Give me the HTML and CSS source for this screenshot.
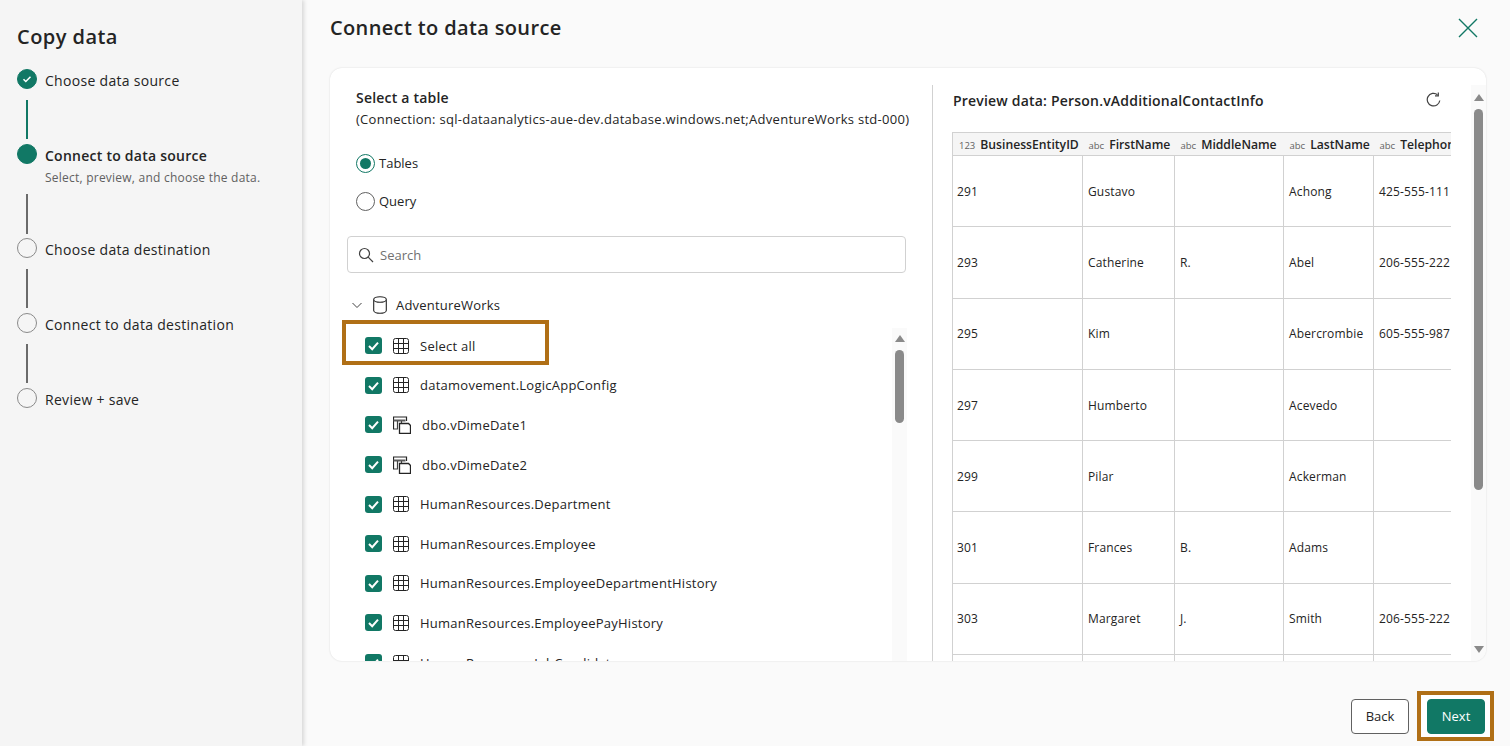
FILE: index.html
```html
<!DOCTYPE html>
<html lang="en">
<head>
  <meta charset="UTF-8">
  <title>Copy data</title>
  <link rel="stylesheet" href="styles.css">
</head>
<body>
  <!-- shared icons -->
  <svg class="defs" width="0" height="0">
    <symbol id="i-check" viewBox="0 0 17 17">
      <path d="M4 9l3.200 3.200L13 5.600" fill="none" stroke="#fff" stroke-width="2"/>
    </symbol>
    <symbol id="i-table" viewBox="0 0 16 16">
      <rect x="0.500" y="0.500" width="15" height="15" rx="2" fill="none" stroke="#242424"/>
      <path d="M5.500 1v14M10.500 1v14M1 5.500h14M1 10.500h14" stroke="#242424" fill="none"/>
    </symbol>
    <symbol id="i-view" viewBox="0 0 18 18">
      <path d="M.5 13.500V1h13v4" fill="none" stroke="#242424" stroke-width="1.200"/>
      <path d="M.5 4.500h12" fill="none" stroke="#5a5a5a" stroke-width="2"/>
      <path d="M4.500 5v8H1M8.500 5v2" fill="none" stroke="#424242" stroke-width="1.200"/>
      <path d="M6.500 7.500h9l2 2v8h-11z" fill="#fff" stroke="#242424" stroke-width="1.300"/>
    </symbol>
  </svg>

  <!-- === LEFT STEPS === -->
  <aside class="sidebar">
    <h1>Copy data</h1>
    <div class="step">
      <div class="marker">
        <span class="dot dot-done"><svg width="10" height="10" viewBox="0 0 10 10"><path d="M1.500 5.200l2.300 2.300L8.500 2.700" fill="none" stroke="#fff" stroke-width="1.500"/></svg></span>
        <span class="line line-done"></span>
      </div>
      <div class="step-text">Choose data source</div>
    </div>
    <div class="step step-current">
      <div class="marker">
        <span class="dot dot-done"></span>
        <span class="line line-long"></span>
      </div>
      <div class="step-text">
        <strong>Connect to data source</strong>
        <small>Select, preview, and choose the data.</small>
      </div>
    </div>
    <div class="step">
      <div class="marker"><span class="dot"></span><span class="line"></span></div>
      <div class="step-text">Choose data destination</div>
    </div>
    <div class="step">
      <div class="marker"><span class="dot"></span><span class="line"></span></div>
      <div class="step-text">Connect to data destination</div>
    </div>
    <div class="step">
      <div class="marker"><span class="dot"></span></div>
      <div class="step-text">Review + save</div>
    </div>
  </aside>

  <!-- === MAIN PANEL === -->
  <main class="main">
    <header class="main-head">
      <h2>Connect to data source</h2>
      <svg class="close" width="20" height="20" viewBox="0 0 20 20"><path d="M1 1l18 18M19 1L1 19" stroke="#117865" stroke-width="1.400" fill="none"/></svg>
    </header>

    <section class="card">
      <!-- table picker -->
      <div class="picker">
        <div class="picker-head">
          <div class="picker-title">Select a table</div>
          <div class="picker-conn">(Connection: sql-dataanalytics-aue-dev.database.windows.net;AdventureWorks std-000)</div>
        </div>
        <label class="radio-row"><span class="radio radio-on"></span>Tables</label>
        <label class="radio-row"><span class="radio"></span>Query</label>
        <div class="search">
          <svg width="16" height="16" viewBox="0 0 16 16"><circle cx="6.500" cy="6.500" r="5" fill="none" stroke="#424242" stroke-width="1.200"/><path d="M10.200 10.200L15 15" stroke="#424242" stroke-width="1.200"/></svg>
          <span>Search</span>
        </div>
        <div class="tree-root">
          <svg width="12" height="12" viewBox="0 0 12 12"><path d="M1.500 4l4.500 4.500L10.500 4" fill="none" stroke="#424242"/></svg>
          <svg class="db" width="14" height="18" viewBox="0 0 14 18"><path d="M.7 3.500v11c0 1.500 2.800 2.800 6.300 2.800s6.300-1.300 6.300-2.800v-11M.7 3.500C.7 2 3.500.7 7 .7s6.300 1.300 6.300 2.800S10.500 6.300 7 6.300.7 5 .7 3.500z" fill="none" stroke="#242424" stroke-width="1.100"/></svg>
          <span>AdventureWorks</span>
        </div>
        <div class="list-wrap">
          <div class="list">
            <div class="row"><span class="check"><svg width="17" height="17"><use href="#i-check"/></svg></span><svg class="ico" width="16" height="16"><use href="#i-table"/></svg><span class="row-name">Select all</span></div>
            <div class="row"><span class="check"><svg width="17" height="17"><use href="#i-check"/></svg></span><svg class="ico" width="16" height="16"><use href="#i-table"/></svg><span class="row-name">datamovement.LogicAppConfig</span></div>
            <div class="row"><span class="check"><svg width="17" height="17"><use href="#i-check"/></svg></span><svg class="ico" width="18" height="18"><use href="#i-view"/></svg><span class="row-name">dbo.vDimeDate1</span></div>
            <div class="row"><span class="check"><svg width="17" height="17"><use href="#i-check"/></svg></span><svg class="ico" width="18" height="18"><use href="#i-view"/></svg><span class="row-name">dbo.vDimeDate2</span></div>
            <div class="row"><span class="check"><svg width="17" height="17"><use href="#i-check"/></svg></span><svg class="ico" width="16" height="16"><use href="#i-table"/></svg><span class="row-name">HumanResources.Department</span></div>
            <div class="row"><span class="check"><svg width="17" height="17"><use href="#i-check"/></svg></span><svg class="ico" width="16" height="16"><use href="#i-table"/></svg><span class="row-name">HumanResources.Employee</span></div>
            <div class="row"><span class="check"><svg width="17" height="17"><use href="#i-check"/></svg></span><svg class="ico" width="16" height="16"><use href="#i-table"/></svg><span class="row-name">HumanResources.EmployeeDepartmentHistory</span></div>
            <div class="row"><span class="check"><svg width="17" height="17"><use href="#i-check"/></svg></span><svg class="ico" width="16" height="16"><use href="#i-table"/></svg><span class="row-name">HumanResources.EmployeePayHistory</span></div>
            <div class="row"><span class="check"><svg width="17" height="17"><use href="#i-check"/></svg></span><svg class="ico" width="16" height="16"><use href="#i-table"/></svg><span class="row-name">HumanResources.JobCandidate</span></div>
          </div>
          <div class="scroll scroll-list">
            <span class="arrow-up"></span>
            <span class="thumb"></span>
          </div>
          <div class="callout"></div>
        </div>
      </div>

      <!-- preview -->
      <div class="preview">
        <div class="preview-body">
          <div class="preview-head">
            <span>Preview data: Person.vAdditionalContactInfo</span>
            <svg width="16" height="16" viewBox="0 0 16 16"><path d="M13.800 8.500A6.300 6.300 0 1 1 11.500 2.700" fill="none" stroke="#424242" stroke-width="1.200"/><path d="M12.300.5v3.300H9" fill="none" stroke="#424242" stroke-width="1.200"/></svg>
          </div>
          <div class="table-clip">
            <table class="grid">
              <colgroup><col class="c1"><col class="c2"><col class="c3"><col class="c4"><col class="c5"></colgroup>
              <thead>
                <tr>
                  <th><i>123</i>BusinessEntityID</th>
                  <th><i>abc</i>FirstName</th>
                  <th><i>abc</i>MiddleName</th>
                  <th><i>abc</i>LastName</th>
                  <th><i>abc</i>Telephone</th>
                </tr>
              </thead>
              <tbody>
                <tr><td>291</td><td>Gustavo</td><td></td><td>Achong</td><td>425-555-111</td></tr>
                <tr><td>293</td><td>Catherine</td><td>R.</td><td>Abel</td><td>206-555-222</td></tr>
                <tr><td>295</td><td>Kim</td><td></td><td>Abercrombie</td><td>605-555-987</td></tr>
                <tr><td>297</td><td>Humberto</td><td></td><td>Acevedo</td><td></td></tr>
                <tr><td>299</td><td>Pilar</td><td></td><td>Ackerman</td><td></td></tr>
                <tr><td>301</td><td>Frances</td><td>B.</td><td>Adams</td><td></td></tr>
                <tr><td>303</td><td>Margaret</td><td>J.</td><td>Smith</td><td>206-555-222</td></tr>
                <tr><td></td><td></td><td></td><td></td><td></td></tr>
              </tbody>
            </table>
          </div>
        </div>
        <div class="scroll scroll-preview">
          <span class="arrow-up"></span>
          <span class="thumb"></span>
          <span class="arrow-down"></span>
        </div>
      </div>
    </section>

    <footer class="actions">
      <button class="btn">Back</button>
      <div class="next-box"><button class="btn btn-primary">Next</button></div>
    </footer>
  </main>
</body>
</html>
```

FILE: styles.css
```css
:root {
  --green: #117865;
  --text: #242424;
  --line: #d1d1d1;
  --callout: #b06f16;
  --bar: #8a8a8a;
}

* {
  box-sizing: border-box;
}

body {
  margin: 0;
  height: 746px;
  display: flex;
  overflow: hidden;
  background: #fafafa;
  color: var(--text);
  font-family: "Open Sans", "Liberation Sans", sans-serif;
  font-size: 13px;
}

.defs {
  position: absolute;
}

/* === SIDEBAR === */
.sidebar {
  width: 302px;
  flex: none;
  padding: 23px 0 0 17px;
  background: #f5f5f5;
  box-shadow: 2px 0 4px rgba(0, 0, 0, 0.14);
  position: relative;
}

.sidebar h1 {
  margin: 0 0 17px;
  height: 29px;
  font-size: 20px;
  line-height: 28px;
  font-weight: 600;
  letter-spacing: 0.45px;
}

.step {
  display: flex;
  height: 75px;
  gap: 8px;
}

.step-current {
  height: 94px;
}

.marker {
  width: 20px;
  display: flex;
  flex-direction: column;
  align-items: center;
}

.dot {
  width: 20px;
  height: 20px;
  flex: none;
  border-radius: 50%;
  border: 1px solid #8a8a8a;
  display: flex;
  align-items: center;
  justify-content: center;
}

.dot-done {
  background: var(--green);
  border-color: var(--green);
}

.line {
  width: 2px;
  flex: 1;
  margin: 11px 0 5px;
  background: #6b6b6b;
}

.line-done {
  background: var(--green);
}

.line-long {
  margin: 30px 0 4px;
}

.step-text {
  padding-top: 2px;
  font-size: 14px;
  line-height: 20px;
  letter-spacing: 0.3px;
}

.step-text strong {
  display: block;
  font-weight: 600;
  letter-spacing: 0.25px;
}

.step-text small {
  display: block;
  font-size: 12px;
  line-height: 16px;
  margin-top: 4px;
  color: #616161;
  letter-spacing: 0.23px;
}

/* === MAIN === */
.main {
  flex: 1;
  min-width: 0;
  display: flex;
  flex-direction: column;
}

.main-head {
  height: 68px;
  flex: none;
  padding: 14px 32px 0 28px;
  display: flex;
  justify-content: space-between;
}

.main-head h2 {
  margin: 0;
  font-size: 20px;
  line-height: 28px;
  font-weight: 600;
  letter-spacing: 0.36px;
}

.close {
  margin-top: 4px;
}

.card {
  height: 593px;
  flex: none;
  margin: 0 24px 0 28px;
  display: flex;
  background: #fff;
  border-radius: 12px;
  box-shadow: 0 0 2px rgba(0, 0, 0, 0.14);
  overflow: hidden;
}

/* === TABLE PICKER === */
.picker {
  width: 602px;
  flex: none;
  display: flex;
  flex-direction: column;
}

.picker-head {
  padding: 20px 0 0 26px;
  height: 76px;
}

.picker-title {
  font-size: 14px;
  line-height: 20px;
  font-weight: 600;
  letter-spacing: 0.2px;
}

.picker-conn {
  font-size: 13px;
  line-height: 22px;
  letter-spacing: 0.28px;
  white-space: nowrap;
}

.radio-row {
  height: 38px;
  padding: 10px 0 0 26px;
  display: flex;
  align-items: flex-start;
  gap: 4px;
  line-height: 18px;
}

.radio {
  width: 19px;
  height: 19px;
  border-radius: 50%;
  border: 1px solid #616161;
  display: flex;
  align-items: center;
  justify-content: center;
}

.radio-on {
  border-color: var(--green);
}

.radio-on::after {
  content: "";
  width: 11px;
  height: 11px;
  border-radius: 50%;
  background: var(--green);
}

.search {
  height: 37px;
  margin: 16px 26px 0 17px;
  padding-left: 10px;
  display: flex;
  align-items: center;
  gap: 6px;
  border: 1px solid var(--line);
  border-radius: 4px;
  color: #707070;
}

.search span {
  padding-top: 1px;
}

.tree-root {
  height: 34px;
  margin: 15px 0 4px;
  padding-left: 21px;
  display: flex;
  align-items: center;
  letter-spacing: 0.2px;
}

.tree-root .db {
  margin: 0 9px 0 10px;
}

.list-wrap {
  flex: 1;
  min-height: 0;
  position: relative;
  display: flex;
}

.list {
  flex: 1;
  padding-left: 35px;
  overflow: hidden;
}

.row {
  height: 39.6px;
  display: flex;
  align-items: center;
  white-space: nowrap;
  letter-spacing: 0.25px;
}

.check {
  width: 17px;
  height: 17px;
  flex: none;
  border-radius: 3px;
  background: var(--green);
  display: flex;
}

.ico {
  margin: 0 11px;
  flex: none;
}

.callout {
  position: absolute;
  left: 12px;
  top: -6px;
  width: 207px;
  height: 45px;
  border: 4px solid var(--callout);
}

/* === SCROLLBARS === */
.scroll {
  width: 15px;
  flex: none;
  display: flex;
  flex-direction: column;
  align-items: center;
  background: #fafafa;
}

.scroll-list {
  margin: 2px 25px 0 0;
  padding-top: 7px;
}

.scroll-list .thumb {
  height: 73px;
  margin-top: 8px;
}

.scroll-preview {
  padding-top: 9px;
}

.scroll-preview .thumb {
  height: 381px;
  margin-top: 8px;
}

.thumb {
  width: 9px;
  border-radius: 5px;
  background: var(--bar);
}

.arrow-up,
.arrow-down {
  width: 0;
  height: 0;
  border-left: 5px solid transparent;
  border-right: 5px solid transparent;
}

.arrow-up {
  border-bottom: 7px solid var(--bar);
}

.arrow-down {
  border-top: 7px solid var(--bar);
  margin-top: auto;
  margin-bottom: 8px;
}

/* === PREVIEW === */
.preview {
  flex: 1;
  min-width: 0;
  margin-top: 17px;
  padding-left: 19px;
  border-left: 1px solid var(--line);
  display: flex;
  justify-content: space-between;
}

.preview-body {
  width: 499px;
  flex: none;
}

.preview-head {
  height: 47px;
  padding: 6px 9px 0 1px;
  display: flex;
  justify-content: space-between;
  font-size: 14px;
  line-height: 20px;
  font-weight: 600;
  letter-spacing: 0.2px;
}

.preview-head svg {
  margin-top: 1px;
}

.table-clip {
  height: 529px;
  overflow: hidden;
}

.grid {
  width: 601px;
  table-layout: fixed;
  border-collapse: collapse;
  font-size: 12px;
  letter-spacing: 0.15px;
}

.c1 { width: 130px; }
.c2 { width: 92px; }
.c3 { width: 109px; }
.c4 { width: 90px; }
.c5 { width: 180px; }

.grid th {
  height: 23px;
  padding: 0 0 0 6px;
  background: #f5f5f5;
  border: 1px solid var(--line);
  border-left: 0;
  border-right: 0;
  text-align: left;
  font-size: 12.2px;
  font-weight: 600;
  letter-spacing: 0;
  white-space: nowrap;
  overflow: hidden;
}

.grid th:first-child {
  border-left: 1px solid var(--line);
}

.grid th i {
  margin-right: 5px;
  font-style: normal;
  font-size: 9.5px;
  font-weight: 400;
  color: #616161;
}

.grid td {
  height: 71.3px;
  padding: 0 0 0 4px;
  border: 1px solid var(--line);
  white-space: nowrap;
  overflow: hidden;
}

.grid td + td {
  padding-left: 5px;
}

/* === FOOTER BUTTONS === */
.actions {
  flex: 1;
  padding: 30px 16px 0 0;
  display: flex;
  justify-content: flex-end;
  align-items: flex-start;
  gap: 8px;
}

.btn {
  width: 58px;
  height: 35px;
  margin-top: 8px;
  padding: 0 0 2px;
  background: #fff;
  color: var(--text);
  border: 1px solid #616161;
  border-radius: 4px;
  font-family: inherit;
  font-size: 13px;
  font-weight: 500;
}

.btn-primary {
  margin: 0;
  background: var(--green);
  border-color: var(--green);
  color: #fff;
}

.next-box {
  padding: 4px 5px 3px 6px;
  border: 4px solid var(--callout);
  background: #fff;
  display: flex;
}
```
